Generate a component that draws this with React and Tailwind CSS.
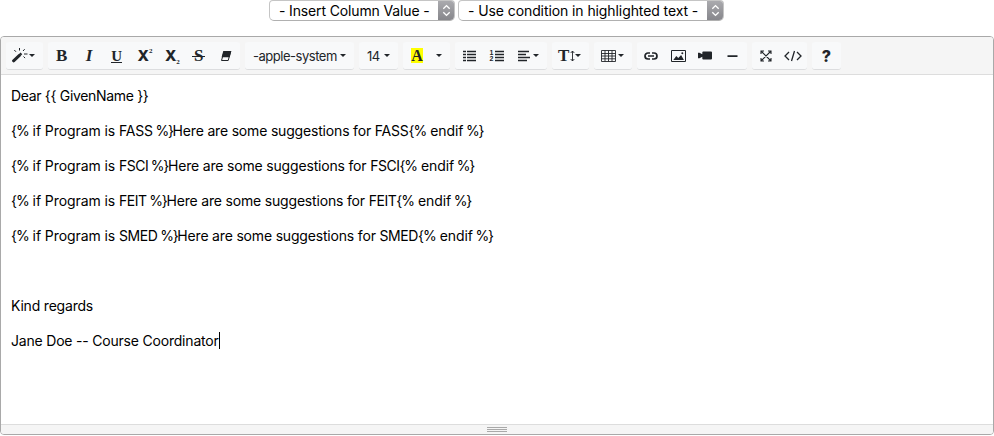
import React from 'react';

function Caret({ className = '' }) {
  return (
    <svg className={`block h-[3px] w-[6px] shrink-0 ${className}`} viewBox="0 0 6 3" fill="#212529">
      <path d="M0 0h6L3 3z" />
    </svg>
  );
}

function Icon({ w = 16, h = 16, className = '', children }) {
  return (
    <svg className={`block shrink-0 ${className}`} width={w} height={h} viewBox={`0 0 ${w} ${h}`} fill="none" stroke="#212529">
      {children}
    </svg>
  );
}

function Group({ className, children }) {
  return (
    <div className={`mr-[5px] flex h-[28px] shrink-0 items-center rounded-[3px] border-b border-[#dcdddf] bg-[#f8f9fa] ${className}`}>
      {children}
    </div>
  );
}

function Btn({ className = 'flex-1 justify-center', children }) {
  return <button type="button" className={`flex h-full min-w-0 items-center ${className}`}>{children}</button>;
}

function Select({ className, textClass, children }) {
  return (
    <div className={`flex h-[21px] shrink-0 overflow-hidden rounded-b-[5px] rounded-t-[4px] border border-[#c5c5c5] border-b-[#b0b0b0] bg-white ${className}`}>
      <span className={`flex-1 whitespace-pre pl-[9px] text-[14px] leading-[20px] text-black ${textClass}`}>{children}</span>
      <span className="-my-px -mr-px flex w-[17px] items-center justify-center bg-gradient-to-b from-[#acacb0] to-[#85858a]">
        <svg className="block" width="9" height="13" viewBox="0 0 9 13" fill="none" stroke="white" strokeWidth="1.4">
          <path d="M1.3 4.7 4.5 1.6l3.2 3.1M1.3 8.3l3.2 3.1 3.2-3.1" />
        </svg>
      </span>
    </div>
  );
}

function Line({ className = 'tracking-[-0.2px]', children }) {
  return <p className={`mb-[14px] flex h-[21px] items-center whitespace-pre ${className}`}>{children}</p>;
}

function Condition({ program, programClass }) {
  return (
    <Line className="">
      <span className="tracking-[-1px]">{'{%'}</span>
      <span className="tracking-[-0.08px]">{' if Program is '}</span>
      <span className={programClass}>{program}</span>
      <span className="tracking-[-1.3px]">{' %}'}</span>
      <span className="tracking-[-0.18px]">{'Here are some suggestions for '}</span>
      <span className={programClass}>{program}</span>
      <span className="tracking-[-1px]">{'{%'}</span>
      <span className="tracking-[-0.08px]">{' endif'}</span>
      <span className="tracking-[-1.3px]">{' %}'}</span>
    </Line>
  );
}

export default function App() {
  return (
    <div className="h-[436px] w-[994px] overflow-hidden bg-white font-['Inter','Liberation_Sans',sans-serif]">
      <div className="flex h-[36px] items-start pl-[269px]">
        <Select className="mr-[3px] w-[186px]" textClass="tracking-[-0.14px]">- Insert Column Value -</Select>
        <Select className="w-[266px]" textClass="tracking-[-0.09px]">- Use condition in highlighted text -</Select>
      </div>

      <div className="flex h-[399px] w-[994px] flex-col overflow-hidden rounded-[4px] border border-[#a9a9a9]">
        <div className="flex h-[38px] shrink-0 border-b border-[#dddddd] bg-[#f5f5f5] pl-[5px] pt-[5px] text-[#212529]">
          <Group className="w-[37px]">
            <Btn className="pl-[6px]">
              <Icon w={17} className="mt-[-1px]">
                <path d="M1.6 13.8 7.4 8.4" strokeWidth="3" strokeLinecap="round" />
                <path d="m8.2 7.6 1.2-1.2" strokeWidth="2.4" />
                <path d="M2.3 3 4 4.8M7.5 1v2.5M12.7 2.2 11 4M12 7h3.5M11.5 9.5l1.6 1.6" strokeWidth="1" />
              </Icon>
              <Caret />
            </Btn>
          </Group>
          <Group className="w-[192px]">
            <Btn><span className="font-['Liberation_Serif',serif] text-[17px] font-bold leading-[20px]">B</span></Btn>
            <Btn><span className="font-['Liberation_Serif',serif] text-[17px] font-bold italic leading-[20px]">I</span></Btn>
            <Btn><span className="h-[14px] border-b border-[#212529] font-['Liberation_Serif',serif] text-[15px] font-bold leading-[14px]">U</span></Btn>
            <Btn>
              <span className="ml-[2px] text-[15px] font-extrabold leading-[20px]">X</span>
              <span className="mb-[9px] font-['Liberation_Serif',serif] text-[7px] font-bold leading-[8px]">2</span>
            </Btn>
            <Btn>
              <span className="ml-[2px] text-[15px] font-extrabold leading-[20px]">X</span>
              <span className="mt-[12px] font-['Liberation_Serif',serif] text-[7px] font-bold leading-[8px]">2</span>
            </Btn>
            <Btn>
              <span className="relative font-['Liberation_Serif',serif] text-[17px] font-bold leading-[20px]">
                S<span className="absolute left-[-2px] top-[10px] h-px w-[13px] bg-[#212529]" />
              </span>
            </Btn>
            <Btn>
              <Icon w={12} h={12}>
                <path d="M4 1.5h6.7L8.2 10.5H1.5z" strokeWidth="1" />
                <path d="M3.3 1h8L9.7 7.2H1.6z" fill="#212529" stroke="none" />
              </Icon>
            </Btn>
          </Group>
          <Group className="w-[109px]">
            <Btn className="pl-[8px]">
              <span className="w-[87px] whitespace-pre text-left text-[13px] leading-[20px] tracking-[-0.48px]">-apple-system</span><Caret />
            </Btn>
          </Group>
          <Group className="w-[39px]">
            <Btn className="pl-[8px]">
              <span className="w-[17px] text-left text-[13px] leading-[20px] tracking-[-0.5px]">14</span><Caret />
            </Btn>
          </Group>
          <Group className="w-[47px]">
            <Btn className="pl-[8px]">
              <span className="h-[15px] w-[12px] bg-[#ffff00] text-center font-['Liberation_Serif',serif] text-[16px] font-bold leading-[15px]">A</span>
            </Btn>
            <Btn className="pl-[13px]"><Caret /></Btn>
          </Group>
          <Group className="w-[92px]">
            <Btn className="w-[28px] justify-center pl-px">
              <Icon w={13} h={12}>
                <path d="M0 1.5h3M0 4.5h3M0 7.5h3M0 10.5h3M4 1.5h9M4 4.5h9M4 7.5h9M4 10.5h9" strokeWidth="1.6" />
              </Icon>
            </Btn>
            <Btn className="w-[27px] justify-center">
              <span className="mr-px flex w-[4px] flex-col font-['Liberation_Sans',sans-serif] text-[7px] font-bold leading-[6px]"><span>1</span><span>2</span></span>
              <Icon w={9} h={12}>
                <path d="M0 1.5h9M0 4.5h9M0 7.5h9M0 10.5h9" strokeWidth="1.6" />
              </Icon>
            </Btn>
            <Btn className="w-[37px] pl-[8px]">
              <Icon w={15} h={12}>
                <path d="M0 1.5h11M0 4.5h8M0 7.5h12M0 10.5h9" strokeWidth="1.6" />
              </Icon>
              <Caret />
            </Btn>
          </Group>
          <Group className="w-[37px]">
            <Btn className="pl-[6px]">
              <span className="w-[12px] text-left font-['Liberation_Serif',serif] text-[17px] font-bold leading-[20px]">T</span>
              <Icon w={5} h={12}><path d="M2.5 1v10M.7 3l1.8-2 1.8 2M.7 9l1.8 2 1.8-2" strokeWidth=".9" /></Icon>
              <Caret />
            </Btn>
          </Group>
          <Group className="w-[38px]">
            <Btn className="pl-[7px]">
              <Icon w={17} h={12}>
                <path d="M.5.5h14v11H.5zM.5 3.5h14M.5 6h14M.5 8.8h14M4 .5v11M7.5.5v11M11 .5v11" strokeWidth=".9" />
              </Icon>
              <Caret />
            </Btn>
          </Group>
          <Group className="w-[110px]">
            <Btn>
              <Icon w={14} h={10}>
                <path d="M6 2H4a3 3 0 0 0 0 6h2M8 2h2a3 3 0 0 1 0 6H8M4 5h6" strokeWidth="1.7" />
              </Icon>
            </Btn>
            <Btn>
              <Icon w={15} h={12}>
                <path d="M.5.5h14v11H.5z" />
                <path d="m2.3 10 3-4 2 2 2.8-3 2.8 5z" fill="#212529" stroke="none" />
                <circle cx="11.3" cy="3.2" r="1" fill="#212529" stroke="none" />
              </Icon>
            </Btn>
            <Btn>
              <Icon w={14} h={9} className="mr-[2px]">
                <path d="M5.3.5H13a1 1 0 0 1 1 1v6a1 1 0 0 1-1 1H5.3a1 1 0 0 1-1-1V5.7L1.5 7.2H0V1.8h1.5l2.8 1.5V1.5a1 1 0 0 1 1-1z" fill="#212529" stroke="none" />
              </Icon>
            </Btn>
            <Btn><Icon w={11} h={12} className="mr-px"><path d="M.5 6.2h10" strokeWidth="1.8" /></Icon></Btn>
          </Group>
          <Group className="w-[55px]">
            <Btn>
              <Icon w={12} h={12}>
                <path d="m1.5 1.5 9 9m0-9-9 9M1 4V1h3M8 1h3v3M11 8v3H8M4 11H1V8" strokeWidth="1.1" />
              </Icon>
            </Btn>
            <Btn>
              <Icon w={18} h={12}>
                <path d="m5 2-4 4 4 4M13 2l4 4-4 4M10.5 1l-3 10" strokeWidth="1.3" />
              </Icon>
            </Btn>
          </Group>
          <Group className="w-[29px]">
            <Btn><span className="text-[16px] font-extrabold leading-[20px]">?</span></Btn>
          </Group>
        </div>

        <div className="flex-1 bg-white px-[10px] pt-[10px] text-[14px] leading-[21px] text-black">
          <Line className="tracking-[-0.32px]">{'Dear {{ GivenName }}'}</Line>
          <Condition program="FASS" programClass="tracking-[-0.2px]" />
          <Condition program="FSCI" programClass="tracking-[-0.5px]" />
          <Condition program="FEIT" programClass="tracking-[-0.45px]" />
          <Condition program="SMED" programClass="tracking-[-0.4px]" />
          <Line />
          <Line>Kind regards</Line>
          <Line>Jane Doe -- Course Coordinator<span className="h-[17px] w-px bg-black" /></Line>
        </div>

        <div className="flex h-[10px] shrink-0 flex-col items-center gap-px border-t border-[#dddddd] bg-[#f5f5f5] pt-[2px]">
          <span className="h-px w-[20px] bg-[#a9a9a9]" />
          <span className="h-px w-[20px] bg-[#a9a9a9]" />
          <span className="h-px w-[20px] bg-[#a9a9a9]" />
        </div>
      </div>
    </div>
  );
}
